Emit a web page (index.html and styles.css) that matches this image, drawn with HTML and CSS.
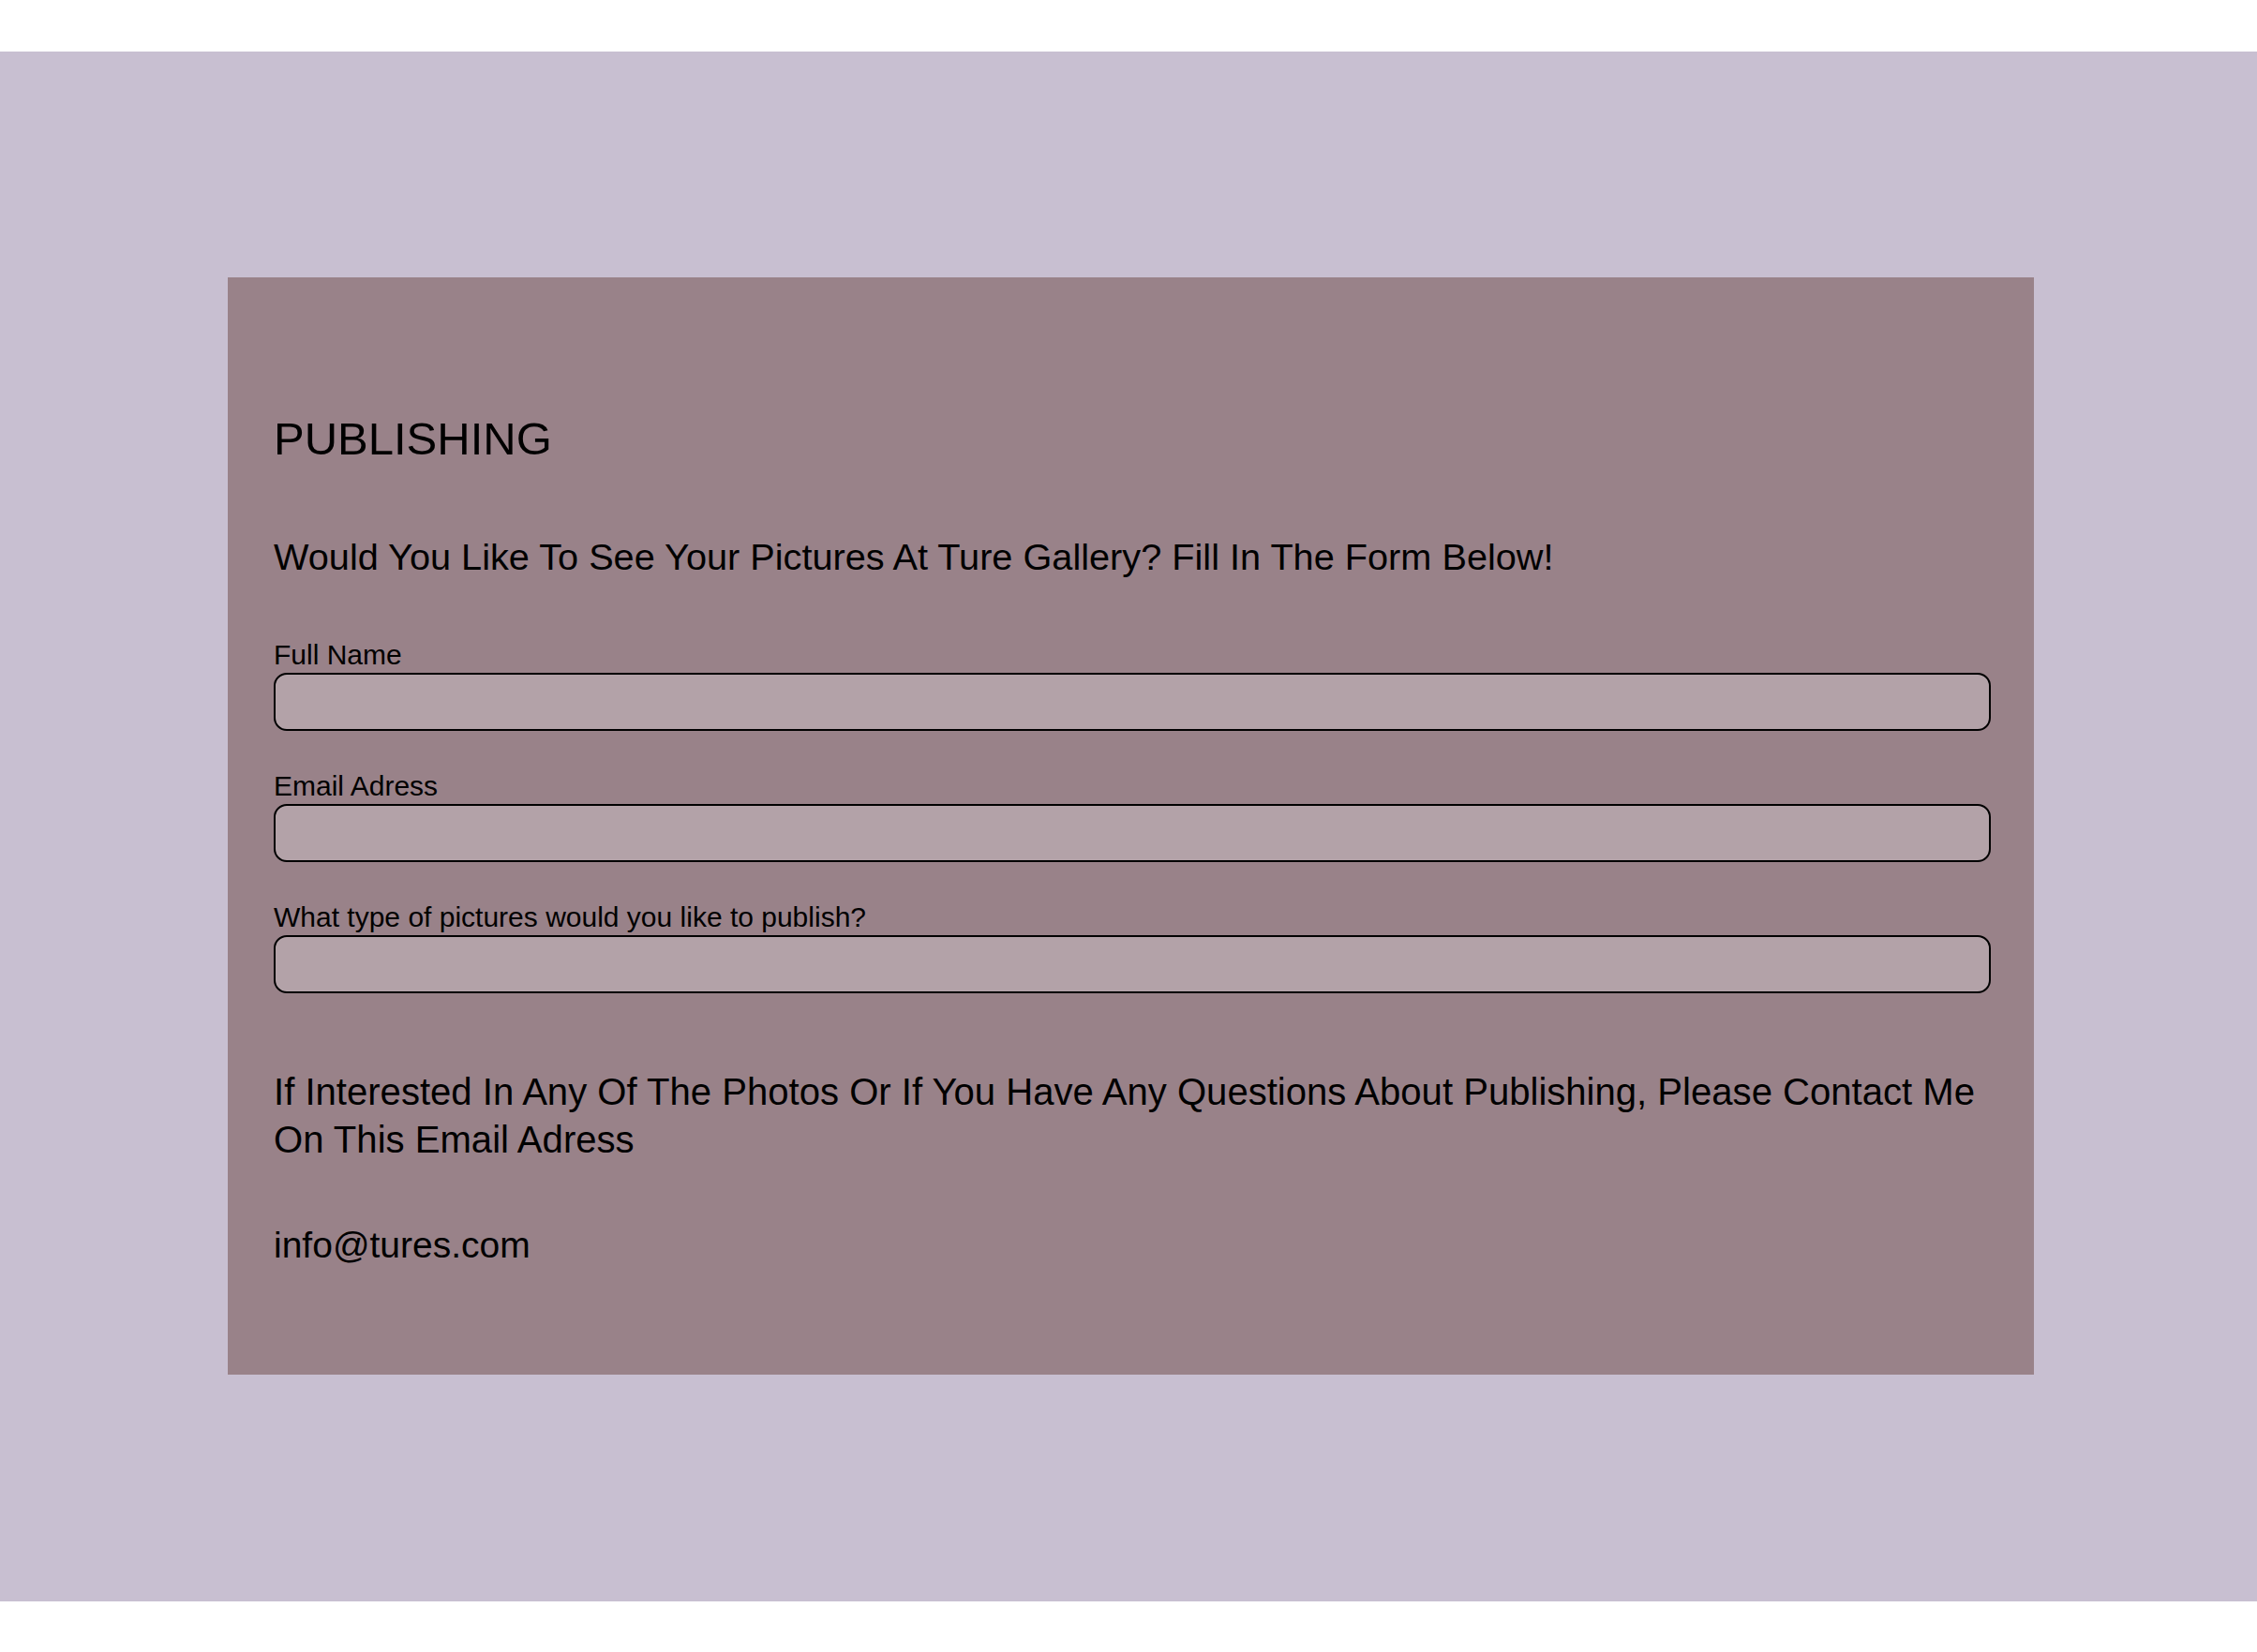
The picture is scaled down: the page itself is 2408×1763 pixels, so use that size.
FILE: index.html
```html
<!DOCTYPE html>
<html lang="en">
<head>
<meta charset="utf-8">
<title>Publishing</title>
<link rel="stylesheet" href="styles.css">
</head>
<body>
<header class="topbar"></header>
<main class="band">
  <section class="card">
    <h1 class="title">PUBLISHING</h1>
    <p class="lead">Would You Like To See Your Pictures At Ture Gallery? Fill In The Form Below!</p>
    <form class="form">
      <div class="field">
        <label class="label" for="name">Full Name</label>
        <input class="input" id="name" type="text">
      </div>
      <div class="field">
        <label class="label" for="email">Email Adress</label>
        <input class="input" id="email" type="text">
      </div>
      <div class="field">
        <label class="label" for="type">What type of pictures would you like to publish?</label>
        <input class="input" id="type" type="text">
      </div>
    </form>
    <p class="contact">If Interested In Any Of The Photos Or If You Have Any Questions About Publishing, Please Contact Me<br>On This Email Adress</p>
    <p class="mail">info@tures.com</p>
  </section>
</main>
<footer class="bottombar"></footer>
</body>
</html>
```
FILE: styles.css
```css
html, body {
  margin: 0;
  padding: 0;
  background: #ffffff;
}
body {
  font-family: "Liberation Sans", Arial, Helvetica, sans-serif;
  color: #000000;
}
.topbar {
  height: 55px;
  background: #ffffff;
}
.bottombar {
  height: 54px;
  background: #ffffff;
}
.band {
  background: #c8bfd1;
  padding: 241px 238px 242px 243px;
}
.card {
  background: #998289;
  padding: 143px 46px 113px 49px;
}
.title {
  margin: 0;
  font-size: 49px;
  line-height: 58px;
  font-weight: normal;
}
.lead {
  margin: 74px 0 0;
  font-size: 39.7px;
  line-height: 46px;
}
.form {
  margin: 65px 0 0;
  display: flex;
  flex-direction: column;
  gap: 42px;
}
.field {
  display: flex;
  flex-direction: column;
  gap: 2px;
}
.label {
  font-size: 30px;
  line-height: 34px;
}
.input {
  display: block;
  width: 100%;
  height: 62px;
  box-sizing: border-box;
  margin: 0;
  background: #b3a2a8;
  border: 2px solid #000000;
  border-radius: 14px;
  outline: none;
  font: inherit;
  padding: 0 16px;
}
.contact {
  margin: 80px 0 0;
  font-size: 40.1px;
  line-height: 51px;
  white-space: nowrap;
}
.mail {
  margin: 61px 0 0;
  font-size: 39px;
  line-height: 51px;
}
```
